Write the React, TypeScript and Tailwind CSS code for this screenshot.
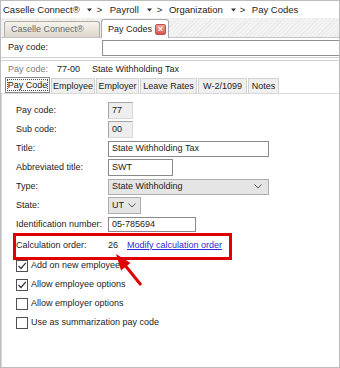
import React from 'react';

const Caret = () => (
  <svg width="5" height="4" viewBox="0 0 5 4" className="shrink-0">
    <path d="M0 0.5 L5 0.5 L2.5 3.5 Z" fill="#333" />
  </svg>
);

const Chevron = () => (
  <svg width="8" height="5" viewBox="0 0 8 5" className="shrink-0">
    <path d="M0.5 0.5 L4 4 L7.5 0.5" fill="none" stroke="#555" strokeWidth="1" />
  </svg>
);

const Check = () => (
  <svg width="10" height="10" viewBox="0 0 10 10">
    <path d="M1.5 5 L4 7.5 L8.8 1.8" fill="none" stroke="#333" strokeWidth="1.2" />
  </svg>
);

const Row: React.FC<{ label: string; children: React.ReactNode; h?: string }> = ({ label, children, h = 'h-[19px]' }) => (
  <div className={`${h} flex items-center`}>
    <span className="w-[92px] shrink-0 whitespace-nowrap">{label}</span>
    {children}
  </div>
);

const CheckRow: React.FC<{ label: string; checked?: boolean }> = ({ label, checked }) => (
  <div className="h-[19px] flex items-center">
    <span className="w-[12px] h-[12px] border border-[#505050] bg-white flex items-center justify-center">
      {checked && <Check />}
    </span>
    <span className="ml-[3px]">{label}</span>
  </div>
);

const subTabs = [
  { label: 'Employee', w: 'w-[44px]' },
  { label: 'Employer', w: 'w-[43px]' },
  { label: 'Leave Rates', w: 'w-[57px]' },
  { label: 'W-2/1099', w: 'w-[49px]' },
  { label: 'Notes', w: 'w-[31px]' },
];

export default function App() {
  return (
    <div className="w-[340px] h-[368px] border border-[#bdbdbd] bg-white relative overflow-hidden text-[9px] leading-none text-[#1c1c1c] font-['Liberation_Sans',Arial,sans-serif]">
      {/* breadcrumb */}
      <div className="h-[17px] flex items-center pl-[2px] text-[9.5px]">
        <span>Caselle Connect®</span>
        <span className="ml-[7px]"><Caret /></span>
        <span className="ml-[5px]">&gt;</span>
        <span className="ml-[7.5px]">Payroll</span>
        <span className="ml-[8px]"><Caret /></span>
        <span className="ml-[5px]">&gt;</span>
        <span className="ml-[6.5px]">Organization</span>
        <span className="ml-[8px]"><Caret /></span>
        <span className="ml-[4px]">&gt;</span>
        <span className="ml-[6.5px]">Pay Codes</span>
      </div>

      {/* window tabs */}
      <div className="h-[20px] flex items-end pl-[3px] bg-[repeating-linear-gradient(135deg,#f3f3f3_0px,#f3f3f3_2px,#eaeaea_2px,#eaeaea_3px)] border-b border-[#c4c4c4]">
        <div className="w-[96px] h-[16px] rounded-t-[3px] border border-b-0 border-[#b3ad9f] bg-gradient-to-b from-[#f7f4ee] to-[#dcd6ca] text-[#6a6a6a] pl-[6px] flex items-center">
          Caselle Connect®
        </div>
        <div className="w-[68px] h-[19px] -mb-px ml-[1px] rounded-t-[3px] border border-b-0 border-[#a9a9a9] bg-white pl-[6px] pr-[2px] flex items-center">
          <span>Pay Codes</span>
          <span className="ml-auto w-[11px] h-[11px] rounded-[2px] border border-[#c0504d] bg-gradient-to-b from-[#f0a09a] to-[#d9534f] text-white flex items-center justify-center text-[9px] font-bold">
            ×
          </span>
        </div>
      </div>

      {/* search row */}
      <div className="h-[20px] flex items-center pl-[7px] border-b border-[#cfcfcf]">
        <span className="w-[94px] shrink-0">Pay code:</span>
        <div className="flex-1 h-[16px] border border-[#8f8f8f] bg-white -mr-[4px]" />
      </div>

      {/* info line */}
      <div className="mt-[2px] border-t border-[#d4d4d4] h-[17px] flex items-center pl-[7px]">
        <span className="w-[49px] text-[#7a7a7a]">Pay code:</span>
        <span className="w-[35px]">77-00</span>
        <span>State Withholding Tax</span>
      </div>

      {/* sub tabs */}
      <div className="h-[16px] flex items-end pl-[4px] gap-[1px]">
        <div className="w-[45px] h-[16px] border border-[#8a8a8a] bg-[#fafafa] p-[1px]">
          <div className="w-full h-full border border-dotted border-[#555] flex items-center justify-center whitespace-nowrap">Pay Code</div>
        </div>
        {subTabs.map(t => (
          <div key={t.label} className={`${t.w} h-[15px] border border-b-0 border-[#d2d2d2] bg-[#efefef] flex items-center justify-center whitespace-nowrap`}>
            {t.label}
          </div>
        ))}
      </div>

      {/* form panel */}
      <div className="border-t border-l border-[#d9d9d9] pt-[7px] pl-[14px] h-[280px]">
        <Row label="Pay code:">
          <div className="w-[25px] h-[17px] border border-[#a5a5a5] border-r-[#d8d8d8] border-b-[#d8d8d8] bg-[#eeeeee] pl-[3px] flex items-center">77</div>
        </Row>
        <Row label="Sub code:">
          <div className="w-[25px] h-[17px] border border-[#a5a5a5] border-r-[#d8d8d8] border-b-[#d8d8d8] bg-[#eeeeee] pl-[3px] flex items-center">00</div>
        </Row>
        <Row label="Title:">
          <div className="w-[161px] h-[16px] border border-[#8a8a8a] bg-white pl-[3px] flex items-center">State Withholding Tax</div>
        </Row>
        <Row label="Abbreviated title:">
          <div className="w-[65px] h-[17px] border border-[#8a8a8a] bg-white pl-[3px] flex items-center">SWT</div>
        </Row>
        <Row label="Type:">
          <div className="w-[161px] h-[16px] border border-[#adadad] bg-[#e5e5e5] pl-[3px] pr-[6px] flex items-center justify-between">
            <span>State Withholding</span>
            <Chevron />
          </div>
        </Row>
        <Row label="State:">
          <div className="w-[33px] h-[17px] border border-[#adadad] bg-[#e5e5e5] pl-[3px] pr-[4px] flex items-center justify-between">
            <span>UT</span>
            <Chevron />
          </div>
        </Row>
        <Row label="Identification number:">
          <div className="w-[88px] h-[15px] border border-[#8a8a8a] bg-white pl-[3px] flex items-center">05-785694</div>
        </Row>
        <Row label="Calculation order:" h="h-[22px]">
          <span className="w-[19px]">26</span>
          <span className="text-[#2a2ad6] underline">Modify calculation order</span>
        </Row>
        <CheckRow label="Add on new employee" checked />
        <CheckRow label="Allow employee options" checked />
        <CheckRow label="Allow employer options" />
        <CheckRow label="Use as summarization pay code" />
      </div>

      {/* annotation: red box */}
      <div className="absolute left-[12px] top-[232px] w-[219px] h-[27px] border-[3px] border-[#e10000] pointer-events-none" />

      {/* annotation: red arrow */}
      <svg className="absolute left-0 top-0 pointer-events-none" width="340" height="368" viewBox="0 0 340 368">
        <line x1="140" y1="284" x2="123" y2="263" stroke="#e10000" strokeWidth="3" />
        <polygon points="115,253 129.5,262 120,269.5" fill="#e10000" />
      </svg>
    </div>
  );
}
